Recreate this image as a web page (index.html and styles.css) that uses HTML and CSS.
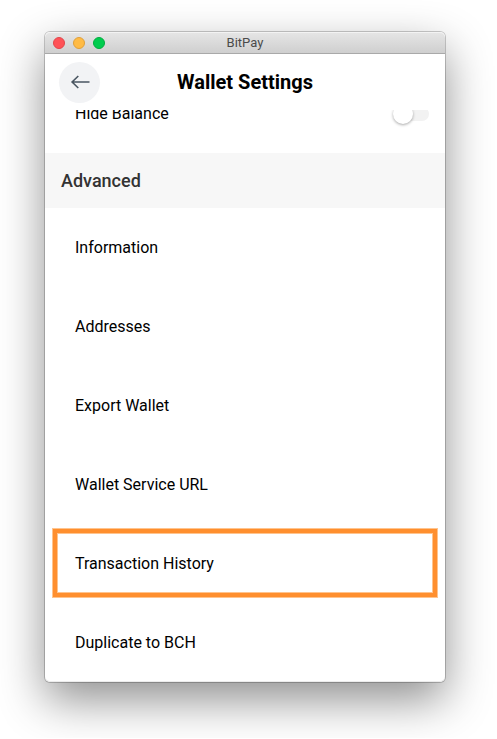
FILE: index.html
```html
<!DOCTYPE html>
<html lang="en">
<head>
    <meta charset="UTF-8">
    <meta name="viewport" content="width=device-width, initial-scale=1.0">
    <title>BitPay</title>
    <link rel="stylesheet" href="styles.css">
</head>
<body>
    <div class="window">
        <div class="titlebar">
            <div class="lights">
                <button class="light close" aria-label="Close"></button>
                <button class="light minimize" aria-label="Minimize"></button>
                <button class="light maximize" aria-label="Maximize"></button>
            </div>
            <span class="app-name">BitPay</span>
        </div>

        <header class="toolbar">
            <button class="back" aria-label="Back">
                <svg width="21" height="15" viewBox="0 0 21 15" fill="none" stroke="#4a5661" stroke-width="1.6">
                    <path d="M20.5 7H3M9.3 1L3.1 7l6.2 6" />
                </svg>
            </button>
            <h1>Wallet Settings</h1>
        </header>

        <main class="content">
            <div class="item scrolled">
                <label for="hideBalance">Hide Balance</label>
                <input type="checkbox" class="toggle" id="hideBalance">
            </div>
            <h2>Advanced</h2>
            <nav>
                <a class="item" href="#information">Information</a>
                <a class="item" href="#addresses">Addresses</a>
                <a class="item" href="#export">Export Wallet</a>
                <a class="item" href="#service-url">Wallet Service URL</a>
                <a class="item highlighted" href="#history">Transaction History</a>
                <a class="item" href="#duplicate">Duplicate to BCH</a>
            </nav>
        </main>
    </div>
</body>
</html>
```

FILE: styles.css
```css
* {
    box-sizing: border-box;
}

body {
    margin: 0;
    padding: 32px 52px 56px 45px;
    background: #fff;
    color: #000;
    font-family: Roboto, sans-serif;
    font-size: 16px;
    overflow: hidden;
}

button {
    border: none;
    padding: 0;
    cursor: pointer;
}

.window {
    background: #fff;
    border-radius: 5px;
    box-shadow: 0 0 0 1px rgba(0, 0, 0, 0.2), 0 18px 46px rgba(0, 0, 0, 0.44);
}

/* title bar */
.titlebar {
    display: grid;
    grid-template-columns: 1fr auto 1fr;
    align-items: center;
    height: 22px;
    padding: 0 8px;
    border-bottom: 1px solid #a9a9a9;
    border-radius: 5px 5px 0 0;
    background: linear-gradient(#e6e6e6, #cfcfcf);
    box-shadow: inset 0 1px 0 #f3f3f3;
}

.lights {
    display: flex;
    gap: 8px;
}

.light {
    width: 12px;
    height: 12px;
    border-radius: 50%;
}

.close {
    background: #ff5257;
    border: 1px solid #e2464b;
}

.minimize {
    background: #ffbb45;
    border: 1px solid #e0a03a;
}

.maximize {
    background: #00cc4e;
    border: 1px solid #00ad3e;
}

.app-name {
    color: #4b4b4b;
    font-size: 13px;
}

/* toolbar */
.toolbar {
    display: grid;
    grid-template-columns: 1fr auto 1fr;
    align-items: center;
    height: 56px;
    padding: 0 14px;
}

.back {
    display: flex;
    align-items: center;
    justify-content: center;
    width: 41px;
    height: 41px;
    border-radius: 50%;
    background: #f2f3f5;
}

h1 {
    margin: 0;
    font-size: 20px;
    font-weight: 700;
}

/* settings list */
.content {
    overflow: hidden;
    border-radius: 0 0 5px 5px;
    box-shadow: inset 0 -1px 0 #ececec;
}

.item {
    position: relative;
    display: flex;
    align-items: center;
    justify-content: space-between;
    height: 79px;
    padding: 0 16px 0 30px;
    color: #000;
    text-decoration: none;
}

/* first row is partly scrolled under the toolbar */
.scrolled {
    margin-top: -36px;
}

h2 {
    margin: 0;
    padding: 0 16px;
    background: #f7f7f7;
    color: #333;
    font-size: 18px;
    font-weight: 500;
    line-height: 55px;
}

.toggle {
    appearance: none;
    position: relative;
    width: 36px;
    height: 14px;
    margin: 0;
    border-radius: 7px;
    background: #f2f2f2;
    cursor: pointer;
}

.toggle::before {
    content: "";
    position: absolute;
    top: -3px;
    left: 0;
    width: 20px;
    height: 20px;
    border-radius: 50%;
    background: #fff;
    box-shadow: 0 1px 3px rgba(0, 0, 0, 0.35);
}

.highlighted::after {
    content: "";
    position: absolute;
    inset: 5px 8px 6px;
    border: 4px solid #ff8f2e;
    box-shadow: 0 0 0 1px #ffc48e, inset 0 0 0 1px #ffc48e;
}
```
